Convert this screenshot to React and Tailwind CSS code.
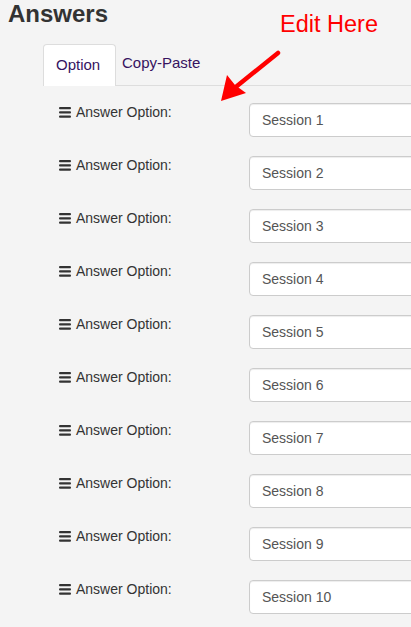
import React from "react";

const sessions = Array.from({ length: 10 }, (_, i) => `Session ${i + 1}`);

function BarsIcon() {
  return (
    <svg width="12" height="11" viewBox="0 0 12 11" className="shrink-0">
      <rect x="0" y="0" width="12" height="2.2" rx="1" fill="#333" />
      <rect x="0" y="4.3" width="12" height="2.2" rx="1" fill="#333" />
      <rect x="0" y="8.6" width="12" height="2.2" rx="1" fill="#333" />
    </svg>
  );
}

function Arrow() {
  return (
    <svg
      className="absolute left-[215px] top-[48px] pointer-events-none"
      width="70"
      height="58"
      viewBox="0 0 70 58"
    >
      {/* shaft */}
      <line x1="63" y1="5" x2="22" y2="38" stroke="#ff0000" strokeWidth="4.5" strokeLinecap="round" />
      {/* head */}
      <polygon points="6,53 12,27 20,37 31,45" fill="#ff0000" />
    </svg>
  );
}

export default function App() {
  return (
    <div
      className="relative min-h-screen w-full overflow-hidden bg-[#f4f4f4] text-[#333]"
      style={{ fontFamily: '"Liberation Sans", Arial, sans-serif' }}
    >
      <h1 className="pl-[8px] pt-[1px] text-[24px] font-bold leading-[26px]">Answers</h1>

      {/* annotation */}
      <div className="absolute left-[280px] top-[10px] text-[23.5px] leading-[28px] text-[#ff0000]">
        Edit Here
      </div>
      <Arrow />

      {/* tabs */}
      <div className="ml-[43px] mt-[16px] flex items-end border-b border-[#dddddd]">
        <div className="-mb-px h-[42px] w-[73px] rounded-t-[4px] border border-b-0 border-[#dddddd] bg-white pl-[12px] text-[15px] leading-[40px] text-[#36135f]">
          Option
        </div>
        <div className="h-[42px] pl-[6px] text-[15px] leading-[40px] text-[#36135f]">Copy-Paste</div>
      </div>

      {/* rows */}
      <div className="mt-[14px] flex flex-col">
        {sessions.map((s) => (
          <div key={s} className="flex h-[53px] items-start">
            <div className="ml-[59px] flex w-[190px] shrink-0 items-center gap-[5px] pt-[2px] text-[14px] leading-[20px]">
              <BarsIcon />
              <span>Answer Option:</span>
            </div>
            <input
              readOnly
              value={s}
              className="mt-[3px] h-[34px] w-[220px] shrink-0 rounded-[4px] border border-[#cccccc] bg-white px-[12px] text-[14px] text-[#555] shadow-[inset_0_1px_1px_rgba(0,0,0,0.075)] outline-none"
            />
          </div>
        ))}
      </div>
    </div>
  );
}
